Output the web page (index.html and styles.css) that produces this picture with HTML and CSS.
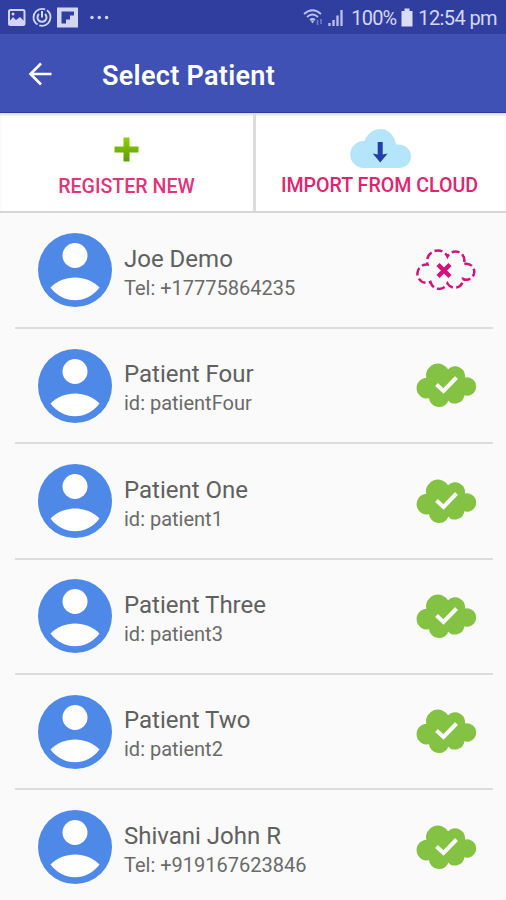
FILE: index.html
```html
<!DOCTYPE html>
<html>
	<head>
		<meta charset="utf-8">
		<title>Select Patient</title>
		<link rel="stylesheet" href="styles.css">
	</head>
	<body>
		<!-- shared icons -->
		<svg class="defs" width="0" height="0">
			<defs>
				<path id="cloudShape" d="M31 7.7A11.250 11.250 0 0 0 10 15.5A9.650 9.650 0 1 0 12.7 34.4A9.250 9.250 0 0 0 31 36A8.600 8.600 0 0 0 46.7 31.3A8.400 8.400 0 1 0 47 15.7A9.1 9.1 0 0 0 31 7.7Z"/>
				<g id="avatar">
					<circle cx="37" cy="37" r="37" fill="#4f89e8"/>
					<circle cx="37" cy="22.5" r="12.5" fill="#fff"/>
					<path d="M12.5 54.5C25 41 49 41 61.5 54.5C49 71.500 25 71.500 12.500 54.500Z" fill="#fff"/>
				</g>
				<g id="synced">
					<use href="#cloudShape" fill="#84c243" stroke="#84c243" stroke-width="1.500"/>
					<path d="M19.500 21.500L26.500 28L39.500 14.500" fill="none" stroke="#fafafa" stroke-width="4"/>
				</g>
				<g id="notSynced" fill="none" stroke="#d5127b">
					<path d="M30.500 8.500A10.800 10.800 0 0 0 10.500 16.500A9.200 9.200 0 1 0 13.500 34A9 9 0 0 0 30.500 35.500A8.300 8.300 0 0 0 46 31A8 8 0 1 0 46.500 16.200A8.800 8.800 0 0 0 30.500 8.500Z" stroke-width="2.500" stroke-dasharray="8 3.300" stroke-dashoffset="4"/>
					<path d="M21 16.500L33 28.500M33 16.500L21 28.500" stroke-width="4.500"/>
				</g>
			</defs>
		</svg>

		<div class="status">
			<svg width="112" height="34" viewBox="0 0 112 34" fill="none" stroke="#d3d6f3">
				<rect x="9" y="10" width="15.500" height="15" rx="1.500" stroke-width="2"/>
				<path d="M9 22L13 17L16 20L20 17L24 21V25H9Z" fill="#d3d6f3" stroke="none"/>
				<circle cx="13" cy="14" r="1.500" fill="#d3d6f3" stroke="none"/>
				<circle cx="42" cy="17.300" r="8.500" stroke-width="1.800" stroke-dasharray="16 2 25 2"/>
				<path d="M39 14A4.500 4.500 0 1 0 45 14M42 11V17.500" stroke-width="2"/>
				<rect x="57" y="7.500" width="21" height="20" fill="#d3d6f3" stroke="none"/>
				<path d="M61.500 11.500H74V15.500H70V19.500H66V23.500H61.500Z" fill="#303f9f" stroke="none"/>
				<g fill="#d3d6f3" stroke="none">
					<circle cx="92" cy="17.500" r="1.700"/>
					<circle cx="99.300" cy="17.500" r="1.700"/>
					<circle cx="106.600" cy="17.500" r="1.700"/>
				</g>
			</svg>
			<div class="status-right">
				<svg width="45" height="34" viewBox="0 0 45 34" fill="none" stroke="#bcc1ea">
					<path d="M1 14Q9.500 6.500 18 14M4 17Q9.500 12 15 17M7 20Q9.500 18 12 20" stroke-width="1.800"/>
					<path d="M7.500 20.500H11.500L9.500 23.500Z" fill="#bcc1ea" stroke="none"/>
					<path d="M14.500 20V25M18 19V24" stroke="#7680c7" stroke-width="1.500"/>
					<path d="M26.500 26V23M30.500 26V20M34.500 26V15.500M38.500 26V10" stroke-width="2.300"/>
				</svg>
				<span class="percent">100%</span>
				<svg class="battery" width="12" height="34" viewBox="0 0 12 34">
					<path d="M3.500 8.500H8.500V11H11.500V26.500H.5V11H3.500Z" fill="#dadcf5"/>
				</svg>
				<span class="time">12:54 pm</span>
			</div>
		</div>

		<div class="toolbar">
			<svg width="24" height="24" viewBox="0 0 24 24" fill="none" stroke="#fff" stroke-width="2.600">
				<path d="M23.500 12H3M13 1.500L2.500 12L13 22.500"/>
			</svg>
			<h1>Select Patient</h1>
		</div>

		<div class="actions">
			<div class="action register">
				<svg width="25" height="25" viewBox="0 0 25 25">
					<linearGradient id="plusFill" x1="0" y1="0" x2="0" y2="1">
						<stop offset="0" stop-color="#8fd00b"/>
						<stop offset="1" stop-color="#5c9a05"/>
					</linearGradient>
					<path d="M9.500 .5H15.500V9.500H24.500V15.500H15.500V24.500H9.500V15.500H.5V9.500H9.500Z" fill="url(#plusFill)"/>
				</svg>
				<span>REGISTER NEW</span>
			</div>
			<div class="action import">
				<svg width="62" height="39" viewBox="0 0 62 39">
					<path d="M14 39A13.500 13.500 0 0 1 15.500 12C19 3.500 25 0 31.500 0C39 0 45.500 6 47 15.500C56 14.500 62 20 62 27.500C62 34 57 39 50 39Z" fill="#b5e5fb"/>
					<path d="M28.700 13H33.700V25.500L38.700 24.500L31.200 33.500L23.700 24.500L28.700 25.500Z" fill="#2440a8"/>
				</svg>
				<span>IMPORT FROM CLOUD</span>
			</div>
		</div>

		<ul class="patients">
			<li>
				<svg class="avatar" viewBox="0 0 74 74"><use href="#avatar"/></svg>
				<div class="info">
					<p class="name">Joe Demo</p>
					<p class="detail">Tel: +17775864235</p>
				</div>
				<svg class="cloud" viewBox="0 0 59 45"><use href="#notSynced"/></svg>
			</li>
			<li>
				<svg class="avatar" viewBox="0 0 74 74"><use href="#avatar"/></svg>
				<div class="info">
					<p class="name">Patient Four</p>
					<p class="detail">id: patientFour</p>
				</div>
				<svg class="cloud" viewBox="0 0 59 45"><use href="#synced"/></svg>
			</li>
			<li>
				<svg class="avatar" viewBox="0 0 74 74"><use href="#avatar"/></svg>
				<div class="info">
					<p class="name">Patient One</p>
					<p class="detail">id: patient1</p>
				</div>
				<svg class="cloud" viewBox="0 0 59 45"><use href="#synced"/></svg>
			</li>
			<li>
				<svg class="avatar" viewBox="0 0 74 74"><use href="#avatar"/></svg>
				<div class="info">
					<p class="name">Patient Three</p>
					<p class="detail">id: patient3</p>
				</div>
				<svg class="cloud" viewBox="0 0 59 45"><use href="#synced"/></svg>
			</li>
			<li>
				<svg class="avatar" viewBox="0 0 74 74"><use href="#avatar"/></svg>
				<div class="info">
					<p class="name">Patient Two</p>
					<p class="detail">id: patient2</p>
				</div>
				<svg class="cloud" viewBox="0 0 59 45"><use href="#synced"/></svg>
			</li>
			<li>
				<svg class="avatar" viewBox="0 0 74 74"><use href="#avatar"/></svg>
				<div class="info">
					<p class="name">Shivani John R</p>
					<p class="detail">Tel: +919167623846</p>
				</div>
				<svg class="cloud" viewBox="0 0 59 45"><use href="#synced"/></svg>
			</li>
		</ul>
	</body>
</html>
```

FILE: styles.css
```css
*{
	padding: 0px;
	margin: 0px;
	box-sizing: border-box;
}
body{
	height: 900px;
	overflow: hidden;
	background-color: #fafafa;
	font-family: Roboto, "Liberation Sans", sans-serif;
}
svg{
	display: block;
	flex-shrink: 0;
	overflow: visible;
}
.defs{
	display: none;
}
.status{
	height: 34px;
	padding-right: 9px;
	display: flex;
	justify-content: space-between;
	background-color: #303f9f;
	color: #d3d6f3;
}
.status-right{
	display: flex;
	font-size: 20px;
	line-height: 36px;
	white-space: nowrap;
}
.percent{
	width: 46px;
	margin-left: 3px;
	letter-spacing: -0.8px;
}
.battery{
	margin: 0px 5px 0px 4px;
}
.time{
	letter-spacing: -0.6px;
}
.toolbar{
	height: 79px;
	padding-left: 28px;
	display: flex;
	align-items: center;
	gap: 50px;
	background-color: #3f51b5;
	border-bottom: 1px solid #2b3fa0;
	color: #fff;
}
.toolbar h1{
	font-size: 27px;
	font-weight: 600;
	line-height: 32px;
	letter-spacing: 0.3px;
	padding-top: 5px;
}
.toolbar svg{
	margin-top: 1px;
}
.actions{
	height: 100px;
	display: flex;
	background-color: #fff;
	border-bottom: 2px solid #d6d6d6;
	box-shadow: inset 0px 3px 3px -1px #d8d8e0;
}
.action{
	width: 253px;
	display: flex;
	flex-direction: column;
	align-items: center;
	color: #e0347b;
	font-size: 19.6px;
	line-height: 24px;
	font-weight: 500;
	white-space: nowrap;
}
.register{
	padding-top: 24px;
	gap: 13px;
}
.import{
	padding: 16px 3px 0px 0px;
	gap: 6px;
	border-left: 3px solid #dcdcdc;
	color: #e0246f;
}
.patients{
	list-style: none;
	padding: 0px 13px 0px 15px;
}
.patients li{
	height: 115.3px;
	padding: 0px 17px 0px 23px;
	display: flex;
	align-items: center;
	border-bottom: 2.5px solid #dcdcdc;
}
.patients li:first-child{
	height: 116.2px;
}
.avatar{
	width: 74px;
	height: 74px;
}
.info{
	flex: 1;
	padding-left: 12px;
	color: #606060;
}
.name{
	font-size: 24px;
	line-height: 29px;
	padding-top: 7px;
}
.detail{
	font-size: 20px;
	line-height: 29px;
	color: #6a6a6a;
}
.cloud{
	width: 59px;
	height: 45px;
}
```
